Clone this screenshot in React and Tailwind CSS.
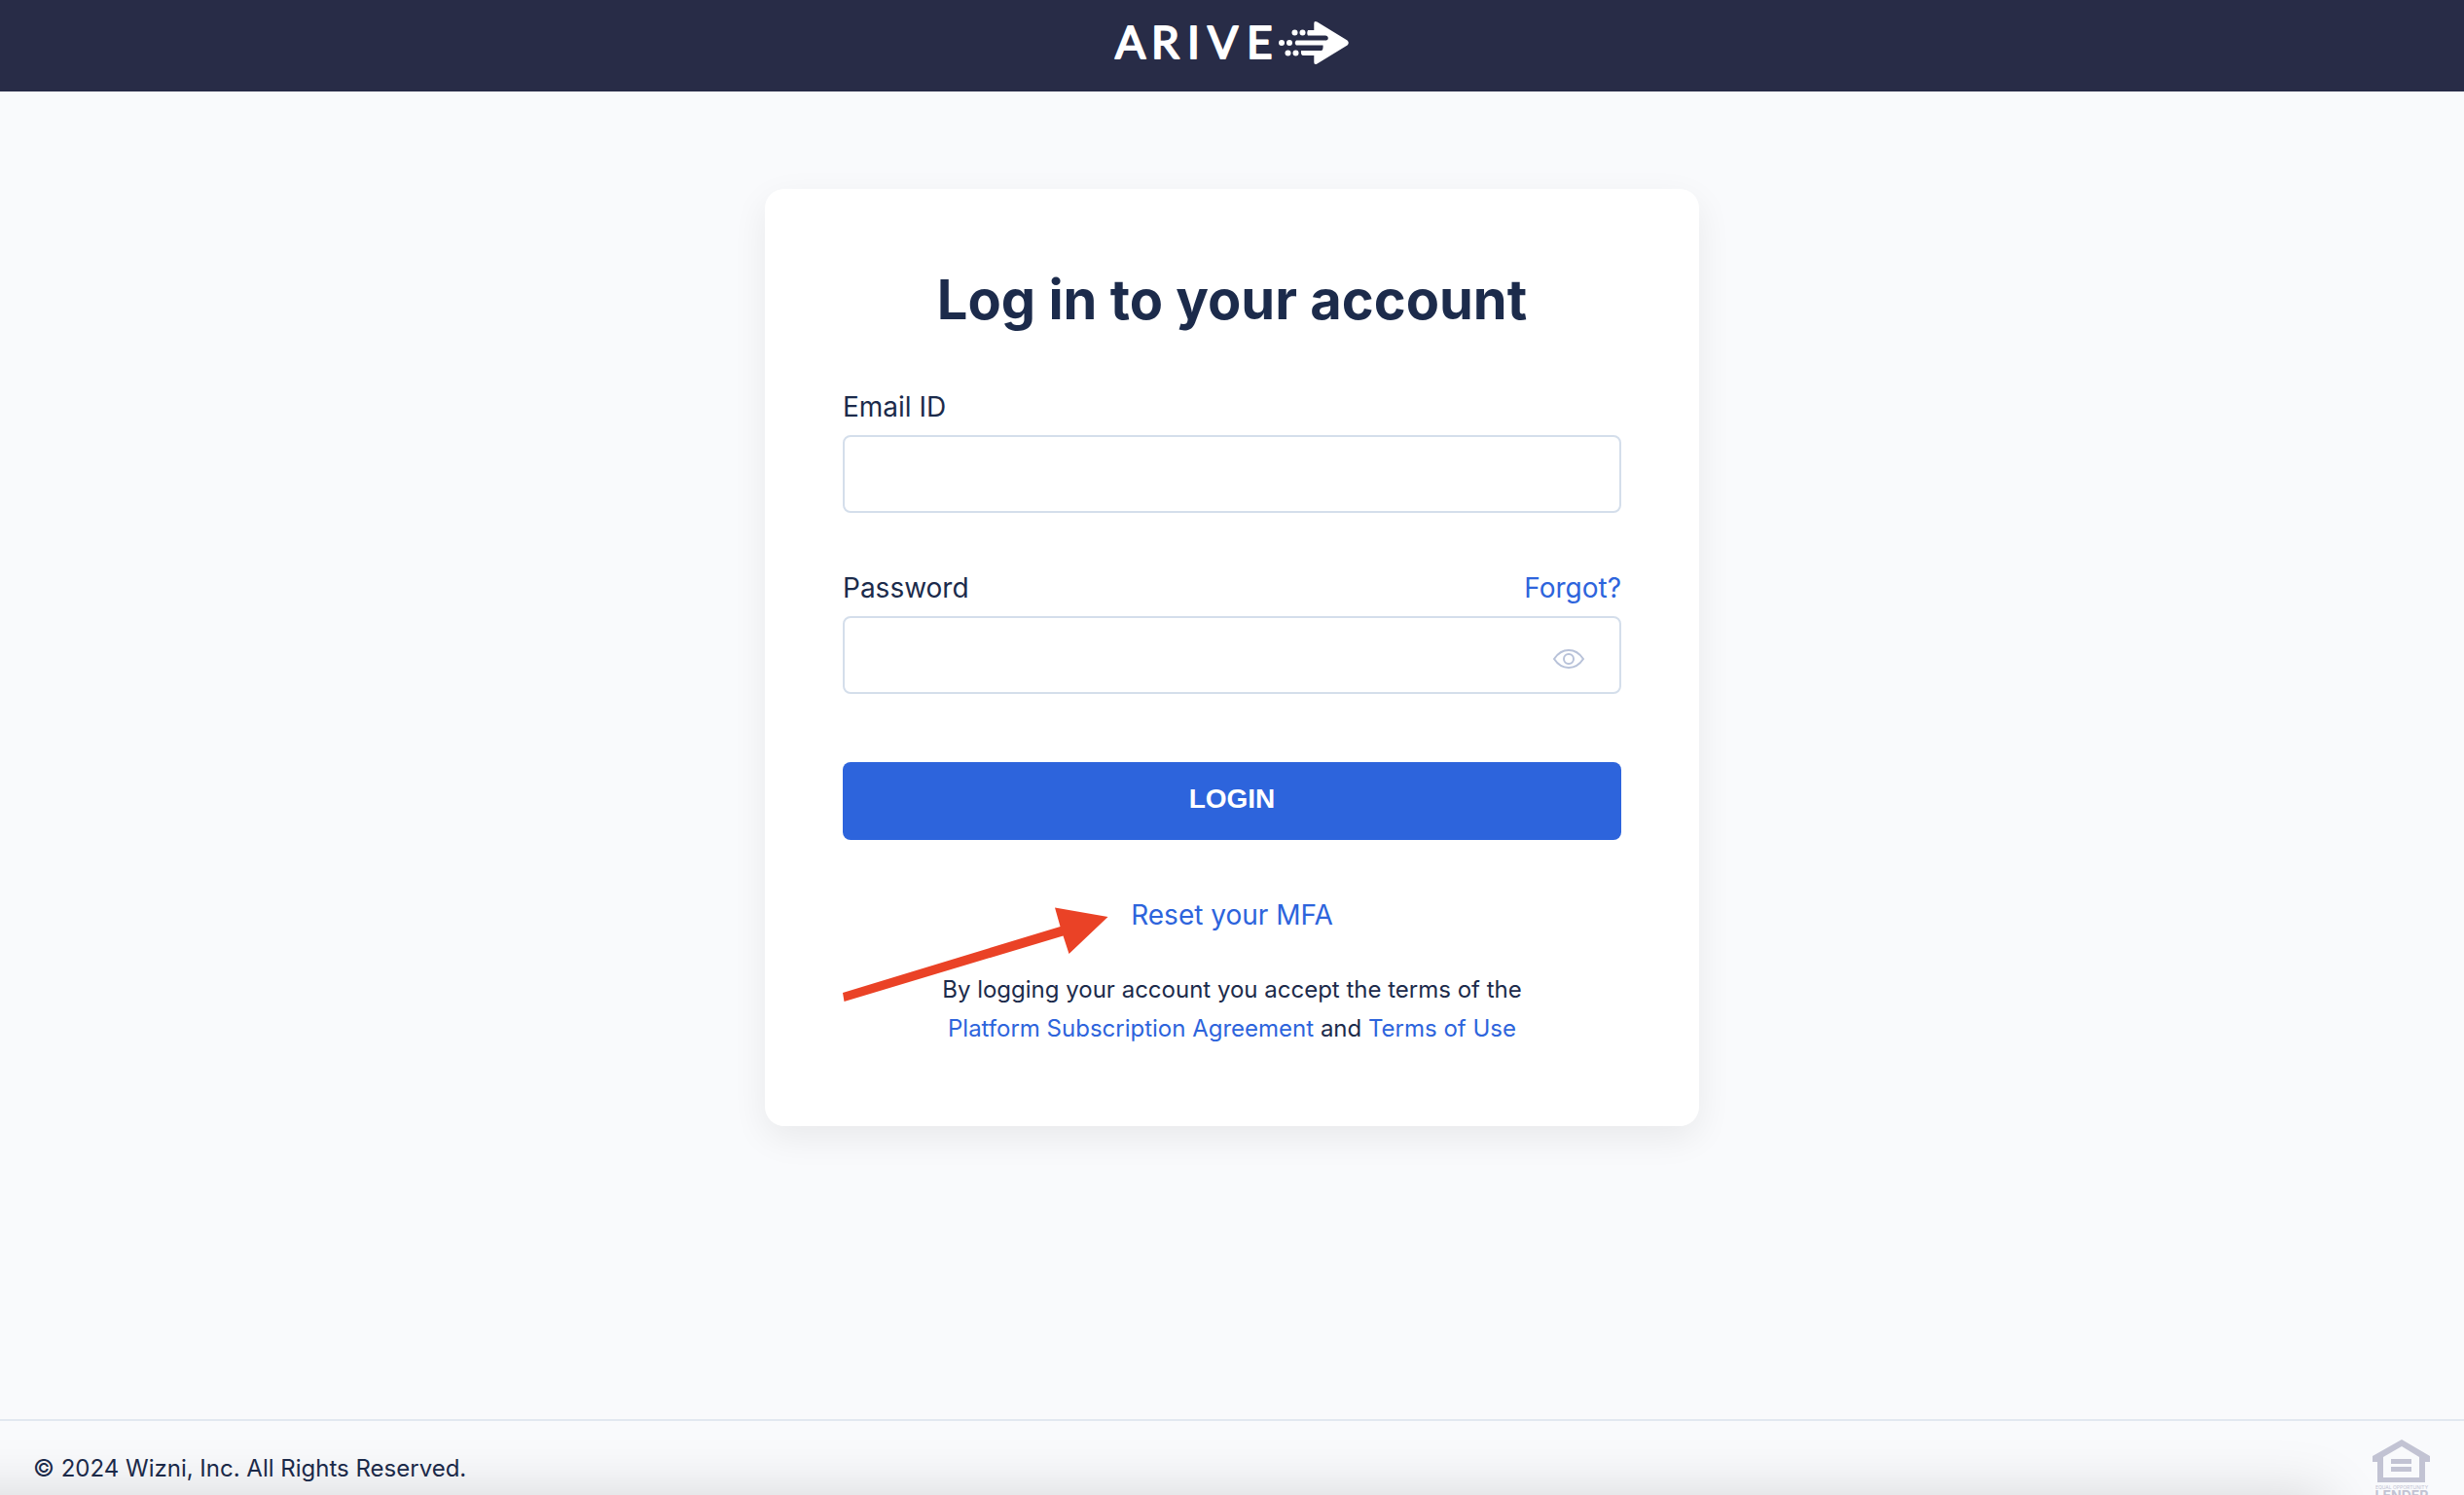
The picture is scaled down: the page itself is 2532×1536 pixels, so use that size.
import React, { useState } from 'react';

const Logo = () => (
  <svg className="w-[252px] h-[46px]" viewBox="1140 21 252 46" fill="#ffffff" role="img" aria-label="Arive">
    <text
      x="1146 1183 1220 1241 1281"
      y="60"
      fontFamily="Lato, sans-serif"
      fontSize="46"
      stroke="#ffffff"
      strokeWidth="2"
      strokeLinejoin="round"
    >
      ARIVE
    </text>
    <circle cx="1330.5" cy="33.5" r="3" />
    <circle cx="1338.5" cy="33.5" r="3" />
    <circle cx="1317" cy="44" r="3" />
    <circle cx="1325" cy="44" r="3" />
    <circle cx="1323.5" cy="54.5" r="3" />
    <circle cx="1331.5" cy="54.5" r="3" />
    <path d="M1350.300 31V24Q1350.300 20.800 1353.500 22.500L1384.500 41.500Q1387 44 1384.500 46.500L1353.500 65.500Q1350.300 67.200 1350.300 64V57H1339Q1336.500 57 1337 52H1358Q1360 51.500 1359.500 46.500H1332Q1329.500 44 1332 41.500H1363Q1365.500 41 1364.500 38Q1364 36.500 1362 36.500H1344Q1342.500 34 1344 31Z" />
  </svg>
);

const EyeIcon = () => (
  <svg className="w-8 h-5" viewBox="0 0 32 20" fill="none" stroke="#b8c2d9" strokeWidth="2">
    <path d="M1 10C9 -2 23 -2 31 10C23 22 9 22 1 10Z" strokeLinejoin="round" />
    <circle cx="16" cy="10" r="5" />
  </svg>
);

const EqualHousingLogo = () => (
  <svg className="w-[60px] h-[66px]" viewBox="0 0 60 66" fill="#c2c3d3" role="img" aria-label="Equal Opportunity Lender">
    <path
      fillRule="evenodd"
      d="M30 0L59 17V23H54V44H5V23H0V17ZM30 7L11 18V39H48V18Z"
    />
    <rect x="19" y="20" width="21" height="5" />
    <rect x="19" y="28" width="21" height="5" />
    <text x="30" y="51" textAnchor="middle" fontFamily="Inter, sans-serif" fontSize="5">
      EQUAL OPPORTUNITY
    </text>
    <text x="30" y="63" textAnchor="middle" fontFamily="Inter, sans-serif" fontSize="14" fontWeight="700">
      LENDER
    </text>
  </svg>
);

const Pointer = () => (
  <svg
    className="absolute left-0 top-[9px] w-[274px] h-[98px]"
    viewBox="866 932 274 98"
    fill="#ea4226"
    aria-hidden="true"
  >
    <path d="M866 1020L1089.500 952L1084 932.500L1138.500 942L1098.500 980L1092.500 961.500L867.500 1029Z" />
  </svg>
);

const inputClass =
  'block w-full h-20 rounded-lg border-2 border-[#d4deeb] bg-white px-6 text-[28px] outline-none focus:border-[#2d64dc]';

const App = () => {
  const [showPassword, setShowPassword] = useState(false);

  return (
    <div className="min-h-screen flex flex-col overflow-hidden bg-[#f9fafc] font-['Inter',sans-serif] text-[#1c2b4b]">
      <header className="h-[94px] flex justify-center bg-[#282c47] pt-[21px]">
        <Logo />
      </header>

      <main className="flex-1 px-6 pt-[100px] pb-10">
        <div className="relative w-full max-w-[960px] mx-auto p-20 rounded-[20px] bg-white shadow-[0_12px_36px_rgba(0,0,0,0.07)]">
          <h1 className="mb-[59px] text-center text-[56px] leading-[68px] font-bold">Log in to your account</h1>

          <form onSubmit={(e) => e.preventDefault()}>
            <label htmlFor="email" className="block mb-3 text-[28px] leading-[34px]">
              Email ID
            </label>
            <input id="email" type="email" className={inputClass} />

            <div className="flex items-center justify-between mt-[60px] mb-3 text-[28px] leading-[34px]">
              <label htmlFor="password">Password</label>
              <a href="#forgot" className="text-[#2d64dc]">
                Forgot?
              </a>
            </div>
            <div className="relative">
              <input id="password" type={showPassword ? 'text' : 'password'} className={inputClass} />
              <button
                type="button"
                onClick={() => setShowPassword(!showPassword)}
                className="absolute right-[38px] top-[34px]"
                aria-label="Show password"
              >
                <EyeIcon />
              </button>
            </div>

            <button
              type="submit"
              className="w-full h-20 pb-1 mt-[70px] rounded-lg bg-[#2d64dc] text-white text-[28px] leading-[34px] font-bold font-['Liberation_Sans',sans-serif]"
            >
              LOGIN
            </button>
          </form>

          <div className="relative mt-[60px] text-center text-[28px] leading-[34px]">
            <a href="#reset-mfa" className="text-[#2d64dc]">
              Reset your MFA
            </a>
            <Pointer />
          </div>

          <p className="mt-10 text-center text-[24px] leading-[40px]">
            By logging your account you accept the terms of the
            <br />
            <a href="#agreement" className="text-[#2d64dc]">
              Platform Subscription Agreement
            </a>{' '}
            and{' '}
            <a href="#terms" className="text-[#2d64dc]">
              Terms of Use
            </a>
          </p>
        </div>
      </main>

      <footer className="relative h-[78px] flex items-start justify-between border-t-2 border-[#e2e8f0] px-[34px] pt-[19px]">
        <p className="pt-[10px] text-[24px] leading-[40px]">© 2024 Wizni, Inc. All Rights Reserved.</p>
        <EqualHousingLogo />
        <div className="absolute top-full -left-20 right-[140px] h-20 shadow-[0_0_60px_rgba(0,0,0,0.15)]" />
      </footer>
    </div>
  );
};

export default App;
